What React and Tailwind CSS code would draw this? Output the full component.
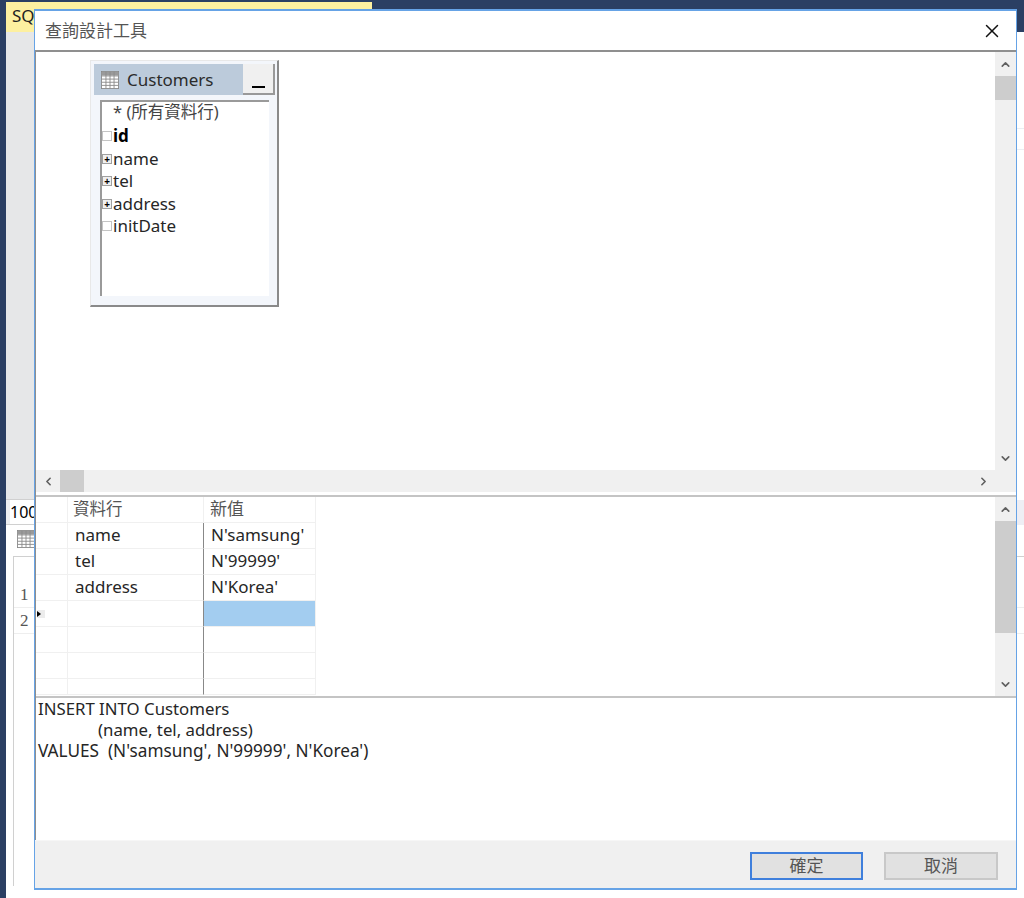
import { ChevronUp, ChevronDown, ChevronLeft, ChevronRight, X } from 'lucide-react';

const FONT = "font-['Noto_Sans','Noto_Sans_CJK_TC',sans-serif]";

const TableIcon = ({ className }) => (
    <svg viewBox="0 0 20 20" className={className} fill="none">
        <rect x="0.5" y="0.5" width="19" height="19" fill="#fff" stroke="#8a8a8a" />
        <rect x="1" y="1" width="18" height="4" fill="#9a9a9a" />
        <path d="M1 5.5H19M1 9H19M1 12.5H19M1 16H19M5.5 1V19M10 1V19M14.5 1V19" stroke="#8a8a8a" strokeWidth="1" />
    </svg>
);

const ExpandBox = ({ plus }) => (
    <span className={`w-[10px] h-[10px] mr-[1px] border flex items-center justify-center shrink-0 ${plus ? 'border-[#a0a0a0] bg-[#f0f0f0]' : 'border-[#c4c4c4] bg-white'}`}>
        {plus && <span className="text-[10px] leading-[8px] font-bold text-black">+</span>}
    </span>
);

const VScroll = ({ thumbHeight }) => (
    <div className="w-[21px] shrink-0 bg-[#f0f0f0] flex flex-col items-center">
        <div className="h-[24px] w-full flex items-center justify-center">
            <ChevronUp size={13} strokeWidth={3} color="#606060" />
        </div>
        <div className="w-full bg-[#cdcdcd]" style={{ height: thumbHeight }} />
        <div className="flex-1" />
        <div className="h-[24px] w-full flex items-center justify-center">
            <ChevronDown size={13} strokeWidth={3} color="#606060" />
        </div>
    </div>
);

const rows = [
    { col: 'name', val: "N'samsung'" },
    { col: 'tel', val: "N'99999'" },
    { col: 'address', val: "N'Korea'" },
    { col: '', val: '', current: true },
    { col: '', val: '' },
    { col: '', val: '' },
    { col: '', val: '' },
];

const GridRow = ({ row, last }) => (
    <div className={`flex ${last ? 'h-[16px]' : 'h-[26px]'} text-[17px] leading-[24px] text-[#262626]`}>
        <div className="w-[32px] shrink-0 border-b border-r border-[#f0f0f0] flex items-center">
            {row.current && (
                <span className="ml-[1px] w-[8px] h-[8px] bg-[#ececec] flex items-center justify-start">
                    <span className="border-y-[3px] border-l-[4px] border-y-transparent border-l-black" />
                </span>
            )}
        </div>
        <div className="w-[135px] shrink-0 border-b border-[#f0f0f0] pl-[7px]">{row.col}</div>
        <div className={`w-[113px] shrink-0 border-l border-l-[#888] border-b border-r border-[#f0f0f0] pl-[7px] whitespace-nowrap ${row.current ? 'bg-[#a3cdf0]' : ''}`}>{row.val}</div>
    </div>
);

export default function App() {
    return (
        <div className={`relative w-[1024px] h-[898px] overflow-hidden bg-white ${FONT}`}>
            {/* Window behind the dialog */}
            <div className="h-[2px] bg-[#2b3f63]" />
            <div className="flex h-[896px]">
                <div className="w-[6px] bg-[#2b3f63]" />
                <div className="flex-1 flex flex-col">
                    <div className="h-[30px] flex">
                        <div className="w-[366px] bg-[#fdf0a0] pl-[6px] text-[17px] leading-[28px] text-[#222]">SQL</div>
                        <div className="flex-1 bg-[#2b3f63]" />
                    </div>
                    <div className="h-[468px] flex">
                        <div className="w-[60px] bg-[#e6e7e8] border-b border-[#d0d0d0]" />
                        <div className="flex-1">
                            <div className="mt-[96px] h-[22px] border-y border-[#eceef2]" />
                        </div>
                    </div>
                    <div className="h-[25px] flex text-[16px] leading-[24px] text-black">
                        <div className="w-[60px] bg-[#eeeef0] pl-[4px] border-b border-[#d0d0d0]">
                            <span className="block bg-white">100</span>
                        </div>
                        <div className="flex-1 bg-[#eeeef4]" />
                    </div>
                    <div className="flex-1 bg-white pl-[11px] pt-[5px]">
                        <TableIcon className="w-[18px] h-[18px]" />
                        <div className="mt-[8px] -ml-[4px] h-[330px] border-l border-t border-[#d0d0d0] font-['Liberation_Serif',serif] text-[17px] text-[#555]">
                            <div className="h-[25px]" />
                            <div className="h-[26px] pl-[6px] leading-[26px] border-b border-[#eee]">1</div>
                            <div className="h-[26px] pl-[6px] leading-[26px] border-b border-[#eee]">2</div>
                        </div>
                    </div>
                </div>
            </div>

            {/* Query designer dialog */}
            <div className="absolute left-[34px] top-[9px] w-[983px] h-[881px] border-y-2 border-x border-[#66a3e6] bg-white flex flex-col">
                <div className="h-[41px] shrink-0 flex items-center justify-between border-b-2 border-[#8f8f8f]">
                    <span className="ml-[10px] text-[17px] text-[#555]">查詢設計工具</span>
                    <X size={22} strokeWidth={1.6} color="#111" className="mr-[13px]" />
                </div>

                <div className="flex-1 flex flex-col border-l border-[#8f8f8f] min-h-0">
                    {/* Diagram pane */}
                    <div className="h-[445px] shrink-0 flex flex-col border-b-2 border-[#c4c4c4]">
                        <div className="flex-1 flex min-h-0">
                            <div className="flex-1 relative">
                                <div className="absolute left-[54px] top-[8px] w-[189px] h-[247px] bg-[#f3f6fb] border border-[#e8e8e8] border-r-2 border-b-2 border-r-[#8a8a8a] border-b-[#8a8a8a] flex flex-col">
                                    <div className="flex h-[31px] mt-[3px] ml-[3px] mr-[2px] bg-[#bccbdb]">
                                        <div className="flex-1 flex items-center pl-[7px] gap-[8px]">
                                            <TableIcon className="w-[18px] h-[18px]" />
                                            <span className="text-[17px] text-[#2b2b2b]">Customers</span>
                                        </div>
                                        <div className="w-[32px] bg-[#f0f0f0] border-r-2 border-b-2 border-r-[#999] border-b-[#999] flex items-end justify-center pb-[5px]">
                                            <span className="block w-[13px] h-[2px] bg-black" />
                                        </div>
                                    </div>
                                    <div className="ml-[9px] mr-[8px] mt-[5px] h-[196px] bg-white border-l-2 border-t-2 border-[#9a9a9a] text-[17px] leading-[22.5px] text-[#262626]">
                                        <div className="pl-[11px] text-[16.5px] text-[#444] mt-[-1px] mb-[1.5px]">* (所有資料行)</div>
                                        <div className="flex items-center font-bold text-black"><ExpandBox />id</div>
                                        <div className="flex items-center"><ExpandBox plus />name</div>
                                        <div className="flex items-center"><ExpandBox plus />tel</div>
                                        <div className="flex items-center"><ExpandBox plus />address</div>
                                        <div className="flex items-center"><ExpandBox />initDate</div>
                                    </div>
                                </div>
                            </div>
                            <VScroll thumbHeight={24} />
                        </div>
                        <div className="h-[22px] shrink-0 bg-[#f0f0f0] flex items-center mb-[3px]">
                            <div className="w-[24px] flex items-center justify-center"><ChevronLeft size={13} strokeWidth={3} color="#606060" /></div>
                            <div className="w-[24px] h-full bg-[#cdcdcd]" />
                            <div className="flex-1" />
                            <div className="w-[24px] mr-[21px] flex items-center justify-center"><ChevronRight size={13} strokeWidth={3} color="#606060" /></div>
                        </div>
                    </div>

                    {/* Criteria grid */}
                    <div className="h-[201px] shrink-0 flex border-b-2 border-[#c4c4c4]">
                        <div className="flex-1">
                            <div className="flex h-[26px] text-[17px] leading-[24px] text-[#555] border-b border-[#f0f0f0] w-[280px]">
                                <div className="w-[32px] border-r border-[#f0f0f0]" />
                                <div className="w-[135px] pl-[5px] text-[16.5px]">資料行</div>
                                <div className="w-[113px] border-l border-r border-[#f0f0f0] pl-[6px]">新值</div>
                            </div>
                            {rows.map((row, i) => (
                                <GridRow key={i} row={row} last={i === rows.length - 1} />
                            ))}
                        </div>
                        <VScroll thumbHeight={112} />
                    </div>

                    {/* SQL pane */}
                    <div className="flex-1 pl-[2px] text-[16.8px] leading-[21px] text-[#262626] whitespace-pre">
                        <div>INSERT INTO Customers</div>
                        <div className="pl-[60px]">(name, tel, address)</div>
                        <div className="text-[17.2px]">VALUES  (N'samsung', N'99999', N'Korea')</div>
                    </div>
                </div>

                <div className="h-[48px] shrink-0 bg-[#f0f0f0] border-t border-[#f6f6f6] flex items-start justify-end gap-[21px] pt-[11px] pr-[18px]">
                    <button className="w-[113px] h-[28px] bg-[#e1e1e1] border-2 border-[#3f7fdc] text-[17px] leading-[22px] text-[#555]">確定</button>
                    <button className="w-[114px] h-[28px] bg-[#e1e1e1] border-2 border-[#c8c8c8] text-[17px] leading-[22px] text-[#555]">取消</button>
                </div>
            </div>
        </div>
    );
}
